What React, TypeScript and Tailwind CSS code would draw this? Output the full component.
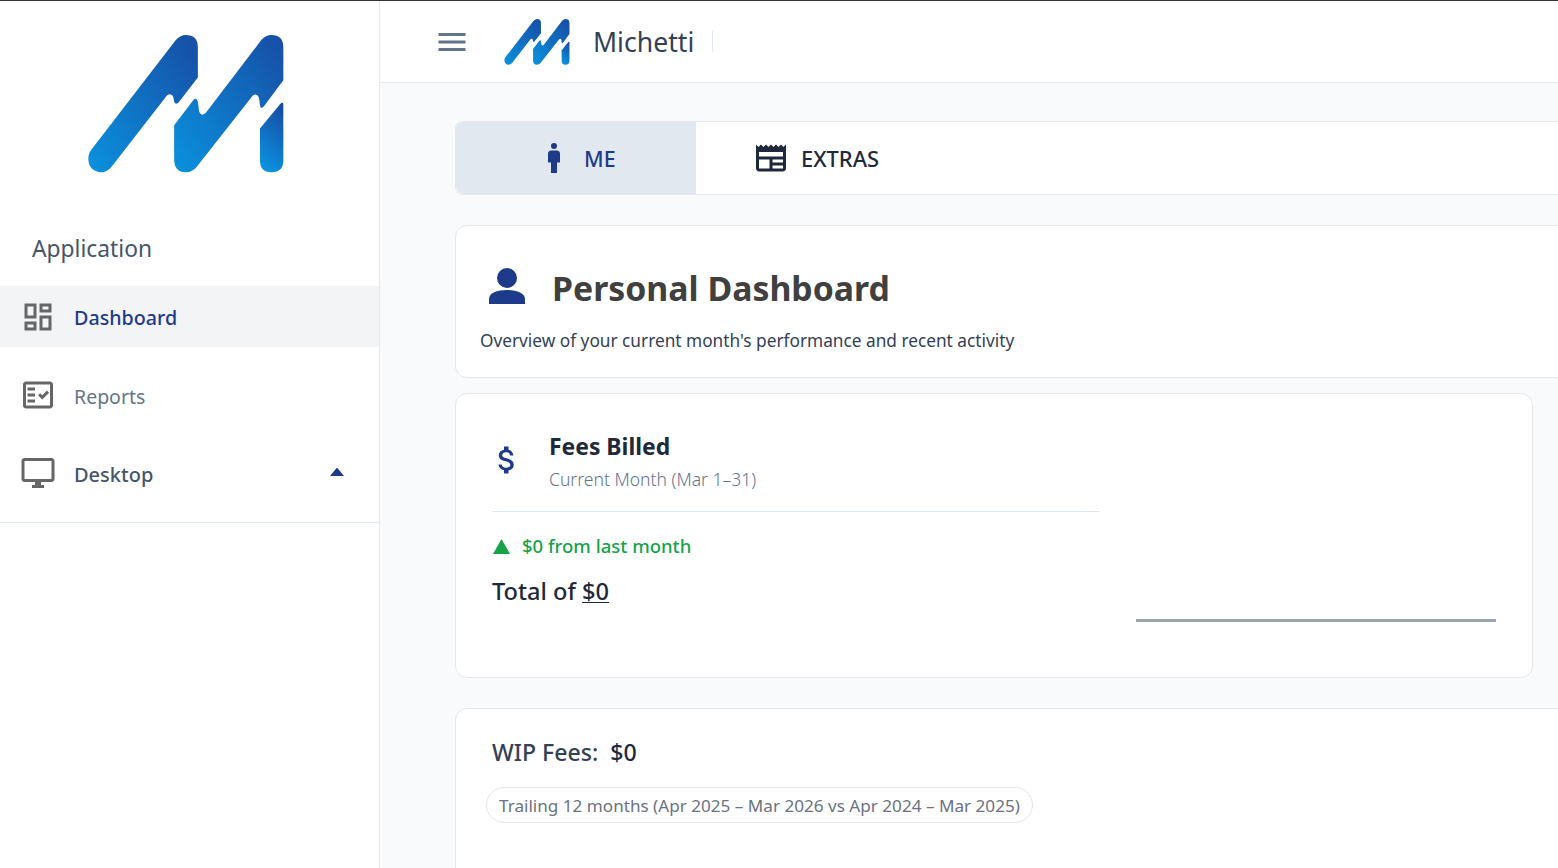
import React from "react";

function Logo({ id, className }: { id: string; className: string }) {
  return (
    <svg viewBox="85 105 587 413" className={className}>
      <defs>
        <linearGradient id={id} x1="1" y1="0" x2="0" y2="1">
          <stop offset="0" stopColor="#174da5" />
          <stop offset="1" stopColor="#0a92de" />
        </linearGradient>
        <linearGradient id={id + "b"} x1="0.7" y1="0" x2="0.4" y2="1">
          <stop offset="0" stopColor="#174da5" />
          <stop offset="1" stopColor="#0a92de" />
        </linearGradient>
      </defs>
      <path fill={`url(#${id})`} d="M348 120 Q362 105 378 105 Q414 105 414 142 L414 232 L358 305 Q348 316 343 305 L340 290 Q335 277 322 285 L155 500 Q140 518 120 516 Q86 510 86 475 Q86 458 96 447 Z" />
      <path fill={`url(#${id})`} d="M604 120 Q618 105 634 105 Q670 105 670 142 L670 240 L612 318 Q602 330 600 315 L597 292 Q590 277 578 287 L412 498 Q398 516 378 516 Q343 516 343 478 L343 375 L400 300 Q410 290 414 305 L418 335 Q425 350 438 338 Z" />
      <path fill={`url(#${id}b)`} d="M660 312 Q670 300 670 315 L670 480 Q670 516 634 516 Q600 516 600 480 L600 385 Z" />
    </svg>
  );
}

function Icon({ d, className, children }: { d?: string; className: string; children?: React.ReactNode }) {
  return (
    <svg viewBox="0 0 24 24" fill="currentColor" className={className}>
      {d && <path d={d} />}
      {children}
    </svg>
  );
}

export default function App() {
  return (
    <div className="flex h-[868px] w-[1558px] overflow-hidden border-t border-[#333333] bg-white font-['Noto_Sans',sans-serif]">
      <aside className="w-[380px] shrink-0 border-r border-[#e5e7eb] bg-white">
        <div className="flex h-[285px] flex-col">
          <div className="flex justify-center pr-[7px] pt-[34px]">
            <Logo id="g1" className="h-[138px] w-[196px]" />
          </div>
          <div className="pl-[32px] pt-[61px] text-[22.8px] leading-[30px] text-[#475569]">Application</div>
        </div>
        <nav className="flex flex-col gap-[17px] border-b border-[#e2e8f0] pb-[19px]">
          <div className="flex h-[61px] items-center gap-[18px] bg-[#f3f4f6] pl-5 text-[19.7px] font-medium text-[#1e3a8a]">
            <Icon className="size-9 text-[#666666]" d="M19 5v2h-4V5h4M9 5v6H5V5h4m10 8v6h-4v-6h4M9 17v2H5v-2h4M21 3h-8v6h8V3zM11 3H3v10h8V3zm10 8h-8v10h8V11zm-10 4H3v6h8v-6z" />
            <span className="mt-[2px]">Dashboard</span>
          </div>
          <div className="flex h-[61px] items-center gap-[18px] pl-5 text-[19.5px] text-[#64748b]">
            <Icon className="size-9 text-[#666666]">
              <path fillRule="evenodd" d="M20 3H4c-1.1 0-2 .9-2 2v14c0 1.1.9 2 2 2h16c1.1 0 2-.9 2-2V5c0-1.1-.9-2-2-2zm0 16H4V5h16v14z" />
              <path d="M19.41 10.42 17.99 9l-3.17 3.17-1.41-1.42L12 12.16 14.82 15zM5 7h5v2H5zM5 11h5v2H5zM5 15h5v2H5z" />
            </Icon>
            <span className="mt-[4px]">Reports</span>
          </div>
          <div className="flex h-[61px] items-center gap-[18px] pl-5 pr-[35px] text-[20px] font-medium text-[#475569]">
            <Icon className="size-9 text-[#666666]" d="M21 2H3c-1.1 0-2 .9-2 2v12c0 1.1.9 2 2 2h7v2H8v2h8v-2h-2v-2h7c1.1 0 2-.9 2-2V4c0-1.1-.9-2-2-2zm0 14H3V4h18v12z" />
            <span className="mt-[4px] flex-1">Desktop</span>
            <svg viewBox="0 0 14 8" className="mb-[1px] h-2 w-[14px] text-[#1e3a8a]" fill="currentColor">
              <path d="M6.2.4a1 1 0 0 1 1.6 0L14 8H0z" />
            </svg>
          </div>
        </nav>
      </aside>

      <div className="flex min-w-0 flex-1 flex-col bg-[#f9fafb]">
        <header className="flex h-[82px] shrink-0 items-center border-b border-[#e5e7eb] bg-white pl-[54px]">
          <Icon className="size-9 text-[#64748b]" d="M3 18h18v-2H3v2zm0-5h18v-2H3v2zm0-7v2h18V6H3z" />
          <Logo id="g2" className="ml-[34px] h-[46px] w-[66px]" />
          <span className="ml-[23px] text-[26.6px] leading-9 text-[#334155]">Michetti</span>
          <span className="ml-[18px] h-[21px] w-px bg-[#e2e8f0]" />
        </header>

        <main className="flex flex-col pl-[75px] pt-[38px]">
          <div className="flex h-[74px] w-[1200px] rounded-l-lg border-y border-l border-[#e5e7eb] bg-white">
            <div className="flex w-[240px] items-center gap-[12px] rounded-l-lg bg-[#e2e8f0] pl-[80px] text-[21.4px] font-medium text-[#1e3a8a]">
              <Icon className="size-9">
                <path d="M14 7h-4c-1.1 0-2 .9-2 2v6h2v7h4v-7h2V9c0-1.1-.9-2-2-2z" />
                <circle cx="12" cy="4" r="2" />
              </Icon>
              <span className="mt-[2px]">ME</span>
            </div>
            <div className="flex items-center gap-[12px] pl-[57px] text-[21.9px] font-medium text-[#1e293b]">
              <Icon className="size-9" d="M22 3l-1.67 1.67L18.67 3 17 4.67 15.33 3l-1.66 1.67L12 3l-1.67 1.67L8.67 3 7 4.67 5.33 3 3.67 4.67 2 3v16c0 1.1.9 2 2 2l16 0c1.1 0 2-.9 2-2V3zM11 19H4v-6h7v6zm9 0h-7v-2h7v2zm0-4h-7v-2h7v2zm0-4H4V8h16v3z" />
              <span className="mt-[2px]">EXTRAS</span>
            </div>
          </div>

          <section className="mt-[30px] h-[153px] w-[1200px] rounded-xl border border-[#e5e7eb] bg-white pl-[24px] pt-[38px]">
            <div className="flex h-[50px] items-center pl-[9px]">
              <svg viewBox="0 0 36 36" className="mb-[6px] size-9 text-[#1e3a8a]" fill="currentColor">
                <circle cx="18" cy="10" r="10" />
                <path d="M0 36v-5c0-6 8-9 18-9s18 3 18 9v5z" />
              </svg>
              <h1 className="mb-[2px] ml-[27px] text-[33.8px] font-bold leading-[50px] text-[#404040]">Personal Dashboard</h1>
            </div>
            <p className="mt-[13px] text-[17.25px] leading-[27px] text-[#334155]">
              Overview of your current month's performance and recent activity
            </p>
          </section>

          <section className="mt-[15px] grid h-[285px] w-[1078px] grid-cols-[608px_360px] gap-[36px] rounded-xl border border-[#e5e7eb] bg-white pl-[36px]">
            <div className="pt-[36px]">
              <div className="flex h-[82px] items-start border-b border-[#e2e8f0]">
                <Icon className="ml-[-3px] mt-[12px] size-9 text-[#1e3a8a]" d="M11.8 10.9c-2.27-.59-3-1.2-3-2.15 0-1.09 1.01-1.85 2.7-1.85 1.78 0 2.44.85 2.5 2.1h2.21c-.07-1.72-1.12-3.3-3.21-3.81V3h-3v2.16c-1.94.42-3.5 1.68-3.5 3.61 0 2.31 1.91 3.46 4.7 4.13 2.5.6 3 1.48 3 2.41 0 .69-.49 1.79-2.7 1.79-2.06 0-2.87-.92-2.98-2.1h-2.2c.12 2.19 1.76 3.42 3.68 3.83V21h3v-2.15c1.95-.37 3.5-1.5 3.5-3.55 0-2.84-2.43-3.81-4.7-4.4z" />
                <div className="ml-[24px]">
                  <div className="text-[22.9px] font-bold leading-[34px] text-[#1e293b]">Fees Billed</div>
                  <div className="text-[17.55px] font-light leading-[31px] text-[#64748b]">Current Month (Mar 1–31)</div>
                </div>
              </div>
              <div className="mt-[20px] flex h-[28px] items-center gap-[12px] pl-[1px] text-[18.5px] font-medium text-[#16a34a]">
                <svg viewBox="0 0 17 15" className="h-[15px] w-[17px]" fill="currentColor"><path d="M8.5 0 17 15H0z" /></svg>
                $0 from last month
              </div>
              <div className="mt-[13px] text-[23.6px] font-medium leading-9 text-[#1e293b]">
                Total of <span className="underline decoration-1 underline-offset-2">$0</span>
              </div>
            </div>
            <div className="pt-[225px]">
              <div className="h-[3px] w-[360px] bg-[#9ca3af]" />
            </div>
          </section>

          <section className="mt-[30px] h-[300px] w-[1200px] rounded-xl border border-[#e5e7eb] bg-white pl-[30px] pt-[25px]">
            <div className="whitespace-pre pl-[6px] text-[23.1px] font-medium leading-9 text-[#334155]">
              WIP Fees:  <span className="text-[#1e293b]">$0</span>
            </div>
            <div className="mt-[17px] inline-flex h-[36px] items-center rounded-full border border-[#e5e7eb] px-3 pt-[1px] text-[17.13px] text-[#6b7280]">
              Trailing 12 months (Apr 2025 – Mar 2026 vs Apr 2024 – Mar 2025)
            </div>
          </section>
        </main>
      </div>
    </div>
  );
}
